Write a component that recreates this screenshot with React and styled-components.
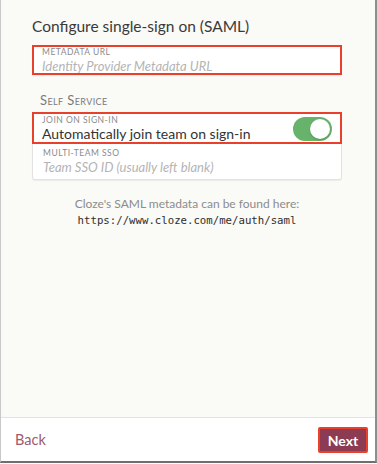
import React from "react";
import styled, { createGlobalStyle } from "styled-components";

const Global = createGlobalStyle`
  html, body { margin: 0; padding: 0; background: #ffffff; }
  * { box-sizing: border-box; }
`;

const Frame = styled.div`
  width: 377px;
  height: 463px;
  display: flex;
  flex-direction: column;
  border-left: 1px solid #c9c9c9;
  border-right: 2px solid #8e8e8e;
  border-bottom: 2px solid #6f6f6f;
  font-family: "Lato", "Open Sans", sans-serif;
`;

const Main = styled.div`
  flex: 1;
  background: #fafaf6;
  padding: 17px 33px 0 31px;
  display: flex;
  flex-direction: column;
`;

const Title = styled.h1`
  margin: 0 0 10px;
  font-size: 15.5px;
  font-weight: 400;
  color: #3a3a3a;
  line-height: 18px;
`;

const Card = styled.div`
  background: #ffffff;
  border: 1px solid #e2e2e2;
  border-radius: 3px;
  box-shadow: 0 1px 1px rgba(0, 0, 0, 0.06);
  display: flex;
  flex-direction: column;
`;

const Field = styled.div`
  position: relative;
  height: ${(p) => p.h || 30}px;
  padding: 1px 8px 0 8px;
  display: flex;
  align-items: center;
  border: 2px solid ${(p) => (p.highlight ? "#e8402a" : "transparent")};
  border-top-color: ${(p) => (p.highlight ? "#e8402a" : p.divider ? "#ececec" : "transparent")};
  margin: ${(p) => (p.highlight ? "-1px" : "0")};
`;

const FieldText = styled.div`
  flex: 1;
  display: flex;
  flex-direction: column;
`;

const Label = styled.div`
  font-size: 8.5px;
  letter-spacing: 0.5px;
  color: #8a8a8a;
  text-transform: uppercase;
  line-height: 10px;
`;

const Placeholder = styled.div`
  font-size: 13px;
  font-style: italic;
  color: #b4b4b4;
  line-height: 18px;
`;

const Value = styled.div`
  font-size: 14px;
  color: #333333;
  line-height: 18px;
`;

const Section = styled.div`
  margin: 19px 0 5px 8px;
  font-size: 13px;
  color: #7a7a7a;
  font-variant: small-caps;
  letter-spacing: 0.4px;
  line-height: 13px;
`;

const Toggle = styled.div`
  width: 39px;
  height: 24px;
  border-radius: 12px;
  background: #68b36b;
  position: relative;
  flex: none;
  margin-right: 0;
`;

const Knob = styled.div`
  position: absolute;
  top: 2px;
  right: 2px;
  width: 20px;
  height: 20px;
  border-radius: 50%;
  background: #ffffff;
  box-shadow: 0 1px 2px rgba(0, 0, 0, 0.2);
`;

const Info = styled.div`
  margin-top: 16px;
  text-align: center;
  font-size: 12px;
  color: #8c8c8c;
  line-height: 16px;
`;

const Url = styled.div`
  margin-top: 1px;
  font-family: "DejaVu Sans Mono", "Liberation Mono", monospace;
  font-size: 10.7px;
  color: #2e2e2e;
  line-height: 16px;
`;

const Footer = styled.div`
  height: 44px;
  flex: none;
  background: #ffffff;
  border-top: 1px solid #e3e3e3;
  display: flex;
  align-items: center;
  justify-content: space-between;
  padding: 0 7px 0 14px;
`;

const BackLink = styled.a`
  font-size: 14.5px;
  color: #a05a6c;
  text-decoration: none;
`;

const NextButton = styled.button`
  width: 50px;
  height: 26px;
  margin-top: 1px;
  background: #8c3b52;
  border: 2px solid #e8402a;
  border-radius: 2px;
  color: #ffffff;
  font-family: "Lato", "Open Sans", sans-serif;
  font-weight: 700;
  font-size: 14px;
  padding: 0;
`;

export default function App() {
  return (
    <>
      <Global />
      <Frame>
        <Main>
          <Title>Configure single-sign on (SAML)</Title>
          <Card>
            <Field highlight h={30}>
              <FieldText>
                <Label>Metadata URL</Label>
                <Placeholder>Identity Provider Metadata URL</Placeholder>
              </FieldText>
            </Field>
          </Card>
          <Section>Self Service</Section>
          <Card>
            <Field highlight h={32}>
              <FieldText>
                <Label>Join on sign-in</Label>
                <Value>Automatically join team on sign-in</Value>
              </FieldText>
              <Toggle>
                <Knob />
              </Toggle>
            </Field>
            <Field h={36}>
              <FieldText>
                <Label>Multi-team SSO</Label>
                <Placeholder>Team SSO ID (usually left blank)</Placeholder>
              </FieldText>
            </Field>
          </Card>
          <Info>
            Cloze's SAML metadata can be found here:
            <Url>https://www.cloze.com/me/auth/saml</Url>
          </Info>
        </Main>
        <Footer>
          <BackLink href="#">Back</BackLink>
          <NextButton>Next</NextButton>
        </Footer>
      </Frame>
    </>
  );
}
